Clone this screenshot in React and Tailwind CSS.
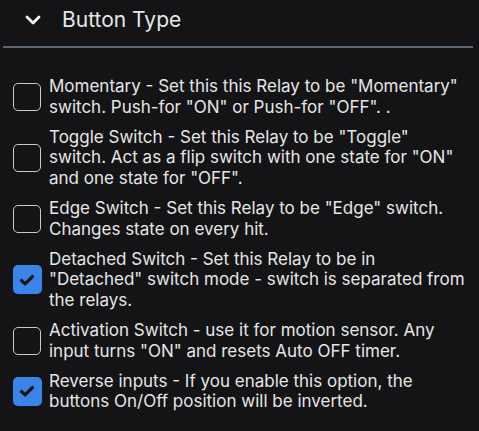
import React, { useState } from "react";

// lines are split the way the original panel wraps them
const options = [
  {
    id: "momentary",
    lines: [
      'Momentary - Set this this Relay to be "Momentary"',
      'switch. Push-for "ON" or Push-for "OFF". .',
    ],
    checked: false,
  },
  {
    id: "toggle",
    lines: [
      'Toggle Switch - Set this Relay to be "Toggle"',
      'switch. Act as a flip switch with one state for "ON"',
      'and one state for "OFF".',
    ],
    checked: false,
  },
  {
    id: "edge",
    lines: [
      'Edge Switch - Set this Relay to be "Edge" switch.',
      "Changes state on every hit.",
    ],
    checked: false,
  },
  {
    id: "detached",
    lines: [
      "Detached Switch - Set this Relay to be in",
      '"Detached" switch mode - switch is separated from',
      "the relays.",
    ],
    checked: true,
  },
  {
    id: "activation",
    lines: [
      "Activation Switch - use it for motion sensor. Any",
      'input turns "ON" and resets Auto OFF timer.',
    ],
    checked: false,
  },
  {
    id: "reverse",
    lines: [
      "Reverse inputs - If you enable this option, the",
      "buttons On/Off position will be inverted.",
    ],
    checked: true,
  },
];

const Checkbox = ({ checked, onChange }) => {
  return (
    <button
      onClick={onChange}
      className={
        checked
          ? "flex h-[29px] w-[29px] shrink-0 items-center justify-center rounded-[5px] bg-[#3a86e8]"
          : "flex h-[28px] w-[28px] shrink-0 items-center justify-center rounded-[5px] border-[1.5px] border-[#c9c9c9]"
      }
    >
      {checked && (
        <svg width="18" height="18" viewBox="0 0 18 18" fill="none">
          <path
            d="M3.5 9.5l3.6 3.4L14.5 5.5"
            stroke="#15161a"
            strokeWidth="3.2"
            strokeLinecap="round"
            strokeLinejoin="round"
          />
        </svg>
      )}
    </button>
  );
};

const App = () => {
  const [items, setItems] = useState(options);

  const toggle = (id) => {
    setItems(
      items.map((item) =>
        item.id === id ? { ...item, checked: !item.checked } : item
      )
    );
  };

  return (
    <div
      className="min-h-screen bg-[#141417] text-[#e6e6e6]"
      style={{ fontFamily: "Inter, 'Noto Sans', sans-serif" }}
    >
      <div className="mx-[3px] w-[470px]">
        {/* Header */}
        <div className="flex items-center border-b-2 border-[#5b6874] pt-[6px] pb-[12px]">
          <svg
            width="18"
            height="12"
            viewBox="0 0 18 12"
            fill="none"
            className="ml-[21px]"
          >
            <path
              d="M3 3l6 6 6-6"
              stroke="#ffffff"
              strokeWidth="2.8"
              strokeLinecap="round"
              strokeLinejoin="round"
            />
          </svg>
          <span className="ml-[20px] text-[21px] leading-[28px]">Button Type</span>
        </div>

        {/* Options */}
        <div className="mt-[28px] flex flex-col gap-[9px] pl-[9px]">
          {items.map((item) => (
            <div key={item.id} className="flex items-center gap-[7px]">
              <div className="flex w-[30px] shrink-0 justify-center">
                <Checkbox
                  checked={item.checked}
                  onChange={() => toggle(item.id)}
                />
              </div>
              <p className="whitespace-nowrap text-[17px] leading-[20.8px]">
                {item.lines.map((line, i) => (
                  <span key={i} className="block">
                    {line}
                  </span>
                ))}
              </p>
            </div>
          ))}
        </div>
      </div>
    </div>
  );
};

export default App;
